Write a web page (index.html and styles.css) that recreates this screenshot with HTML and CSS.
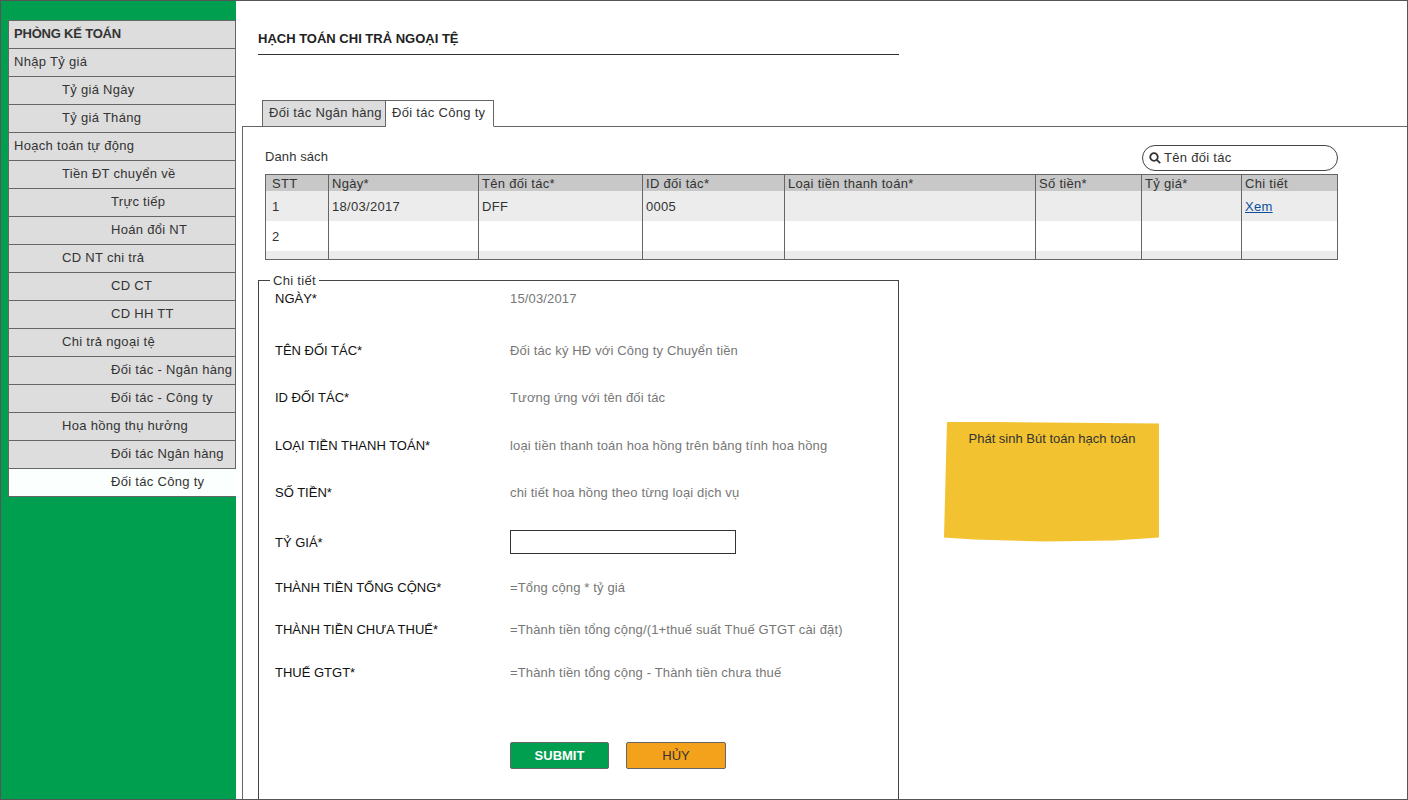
FILE: index.html
```html
<!DOCTYPE html>
<html lang="vi">
<head>
<meta charset="UTF-8" />
<title>Hạch toán chi trả ngoại tệ</title>
<link rel="stylesheet" href="styles.css">
</head>
<body>
  <div class="page">
    <aside class="sidebar">
      <ul class="menu">
        <li class="menu-head">PHÒNG KẾ TOÁN</li>
        <li>Nhập Tỷ giá</li>
        <li class="lv1">Tỷ giá Ngày</li>
        <li class="lv1">Tỷ giá Tháng</li>
        <li>Hoạch toán tự động</li>
        <li class="lv1">Tiền ĐT chuyển về</li>
        <li class="lv2">Trực tiếp</li>
        <li class="lv2">Hoán đổi NT</li>
        <li class="lv1">CD NT chi trả</li>
        <li class="lv2">CD CT</li>
        <li class="lv2">CD HH TT</li>
        <li class="lv1">Chi trả ngoại tệ</li>
        <li class="lv2">Đối tác - Ngân hàng</li>
        <li class="lv2">Đối tác - Công ty</li>
        <li class="lv1">Hoa hồng thụ hưởng</li>
        <li class="lv2">Đối tác Ngân hàng</li>
        <li class="lv2 active">Đối tác Công ty</li>
      </ul>
    </aside>

    <main class="content">
      <h1 class="title">HẠCH TOÁN CHI TRẢ NGOẠI TỆ</h1>

      <div class="tabs">
        <div class="tab">Đối tác Ngân hàng</div>
        <div class="tab current">Đối tác Công ty</div>
      </div>

      <section class="panel">
        <div class="list-head">
          <span class="list-name">Danh sách</span>
          <div class="search">
            <svg width="12" height="12" viewBox="0 0 12 12" fill="none" stroke="#333" stroke-width="1.8">
              <circle cx="5" cy="5" r="3.8" />
              <path d="M7.8 7.8L11.2 11.2" />
            </svg>
            <span class="search-text">Tên đối tác</span>
          </div>
        </div>

        <table class="grid">
          <colgroup>
            <col class="c1"><col class="c2"><col class="c3"><col class="c4">
            <col class="c5"><col class="c6"><col class="c7"><col class="c8">
          </colgroup>
          <thead>
            <tr>
              <th>STT</th><th>Ngày*</th><th>Tên đối tác*</th><th>ID đối tác*</th>
              <th>Loại tiền thanh toán*</th><th>Số tiền*</th><th>Tỷ giá*</th><th>Chi tiết</th>
            </tr>
          </thead>
          <tbody>
            <tr class="odd">
              <td>1</td><td>18/03/2017</td><td>DFF</td><td>0005</td>
              <td></td><td></td><td></td><td><a href="#">Xem</a></td>
            </tr>
            <tr>
              <td>2</td><td></td><td></td><td></td><td></td><td></td><td></td><td></td>
            </tr>
            <tr class="odd tail">
              <td></td><td></td><td></td><td></td><td></td><td></td><td></td><td></td>
            </tr>
          </tbody>
        </table>

        <div class="lower">
          <fieldset class="detail">
            <legend>Chi tiết</legend>
            <div class="fields">
              <label>NGÀY*</label><span class="val">15/03/2017</span>
              <label>TÊN ĐỐI TÁC*</label><span class="val">Đối tác ký HĐ với Công ty Chuyển tiền</span>
              <label>ID ĐỐI TÁC*</label><span class="val">Tương ứng với tên đối tác</span>
              <label>LOẠI TIỀN THANH TOÁN*</label><span class="val">loại tiền thanh toán hoa hồng trên bảng tính hoa hồng</span>
              <label>SỐ TIỀN*</label><span class="val">chi tiết hoa hồng theo từng loại dịch vụ</span>
              <label>TỶ GIÁ*</label><input type="text" class="rate" />
              <label>THÀNH TIỀN TỔNG CỘNG*</label><span class="val">=Tổng cộng * tỷ giá</span>
              <label>THÀNH TIỀN CHƯA THUẾ*</label><span class="val">=Thành tiền tổng cộng/(1+thuế suất Thuế GTGT cài đặt)</span>
              <label>THUẾ GTGT*</label><span class="val">=Thành tiền tổng cộng - Thành tiền chưa thuế</span>
              <div class="actions">
                <button type="button" class="btn submit">SUBMIT</button>
                <button type="button" class="btn cancel">HỦY</button>
              </div>
            </div>
          </fieldset>
          <div class="note">Phát sinh Bút toán hạch toán</div>
        </div>
      </section>
    </main>
  </div>
</body>
</html>
```

FILE: styles.css
```css
* {
  box-sizing: border-box;
}
html, body {
  margin: 0;
  padding: 0;
}
body {
  font-family: 'Liberation Sans', Arial, sans-serif;
  font-size: 13px;
  letter-spacing: 0.3px;
  color: #333;
  background: #fff;
}
.page {
  width: 1408px;
  height: 800px;
  border: 1px solid #555;
  display: flex;
  overflow: hidden;
}

/* sidebar */
.sidebar {
  width: 235px;
  flex-shrink: 0;
  background: #009e4f;
  padding: 19px 0 0 7px;
}
.menu {
  list-style: none;
  margin: 0;
  padding: 0;
  border-top: 1px solid #666;
  border-left: 1px solid #666;
}
.menu li {
  height: 28px;
  line-height: 25px;
  padding-left: 5px;
  background: #ddd;
  border-bottom: 1px solid #666;
  border-right: 1px solid #666;
  white-space: nowrap;
}
.menu .menu-head {
  font-weight: bold;
  letter-spacing: -0.2px;
}
.menu .lv1 {
  padding-left: 53px;
}
.menu .lv2 {
  padding-left: 102px;
}
.menu .active {
  background: #fbfffd;
  border-right: none;
}

/* main area */
.content {
  flex: 1;
  min-width: 0;
}
.title {
  width: 641px;
  height: 34px;
  margin: 20px 0 0 22px;
  font-size: 13px;
  font-weight: bold;
  letter-spacing: 0;
  line-height: 36px;
  color: #222;
  border-bottom: 1px solid #333;
}
.tabs {
  display: flex;
  margin: 45px 0 -1px 26px;
  position: relative;
}
.tab {
  height: 27px;
  width: 124px;
  padding-left: 6px;
  line-height: 23px;
  background: #ddd;
  border: 1px solid #666;
}
.tab.current {
  width: 108px;
  background: #fff;
  border-left: none;
  border-bottom-color: #fff;
}
.panel {
  margin-left: 6px;
  margin-right: -2px;
  height: 680px;
  border: 1px solid #666;
  padding: 0 0 0 15px;
}

/* list */
.list-head {
  display: flex;
  justify-content: space-between;
  align-items: center;
  width: 1073px;
  height: 26px;
  margin: 18px 0 3px 7px;
}
.list-name {
  padding-bottom: 4px;
  letter-spacing: 0.1px;
}
.search {
  width: 196px;
  height: 26px;
  border: 1px solid #444;
  border-radius: 13px;
  display: flex;
  align-items: center;
  gap: 3px;
  padding-left: 6px;
}
.search-text {
  padding-bottom: 2px;
}
.grid {
  width: 1072px;
  margin-left: 7px;
  border-collapse: collapse;
  table-layout: fixed;
  border: 1px solid #666;
}
.c1 { width: 63px; }
.c2 { width: 150px; }
.c3 { width: 164px; }
.c4 { width: 142px; }
.c5 { width: 251px; }
.c6 { width: 106px; }
.c7 { width: 100px; }
.c8 { width: 96px; }
.grid th {
  height: 16px;
  padding: 1px 3px 0;
  font-weight: normal;
  text-align: left;
  background: #c8c8c8;
  border-left: 1px solid #666;
  line-height: 15px;
}
.grid td {
  height: 30px;
  padding: 0 3px;
  border-left: 1px solid #666;
}
.grid th:first-child,
.grid td:first-child {
  padding-left: 6px;
}
.grid .odd td {
  background: #ececec;
}
.grid .tail td {
  height: 8px;
  padding: 0;
}
.grid a {
  color: #0b4f9e;
}

/* detail form */
.lower {
  display: flex;
  align-items: flex-start;
  margin-top: 14px;
}
.detail {
  width: 641px;
  height: 560px;
  flex-shrink: 0;
  margin: 0;
  padding: 1px 0 0 16px;
  border: 1px solid #444;
}
.detail legend {
  padding: 0 3px;
  margin-left: -5px;
  line-height: 14px;
}
.fields {
  display: grid;
  grid-template-columns: 235px 360px;
  grid-template-rows: 52px 47px 48px 47px 50px 45px 42px 43px 79px auto;
  align-items: start;
  line-height: 20px;
  white-space: nowrap;
}
.fields label {
  color: #111;
  letter-spacing: 0;
}
.val {
  color: #777;
  letter-spacing: 0.15px;
}
.rate {
  width: 226px;
  height: 24px;
  margin-top: -3px;
  border: 1px solid #333;
  background: #fff;
}
.actions {
  grid-column: 2;
  display: flex;
  gap: 17px;
}
.btn {
  width: 99px;
  height: 27px;
  padding: 0;
  font-family: inherit;
  font-size: 13px;
  letter-spacing: 0;
  border: 1px solid #666;
  border-radius: 2px;
}
.submit {
  background: #009e4f;
  color: #fff;
  font-weight: bold;
}
.cancel {
  width: 100px;
  background: #f4a21b;
  color: #333;
}

/* sticky note */
.note {
  width: 216px;
  height: 120px;
  margin: 148px 0 0 45px;
  padding-top: 9px;
  text-align: center;
  letter-spacing: 0;
  background: #f2c230;
  clip-path: polygon(3px 0, 215px 2px, 215px 116px, 170px 119px, 100px 120px, 30px 118px, 0 116px);
}
```
